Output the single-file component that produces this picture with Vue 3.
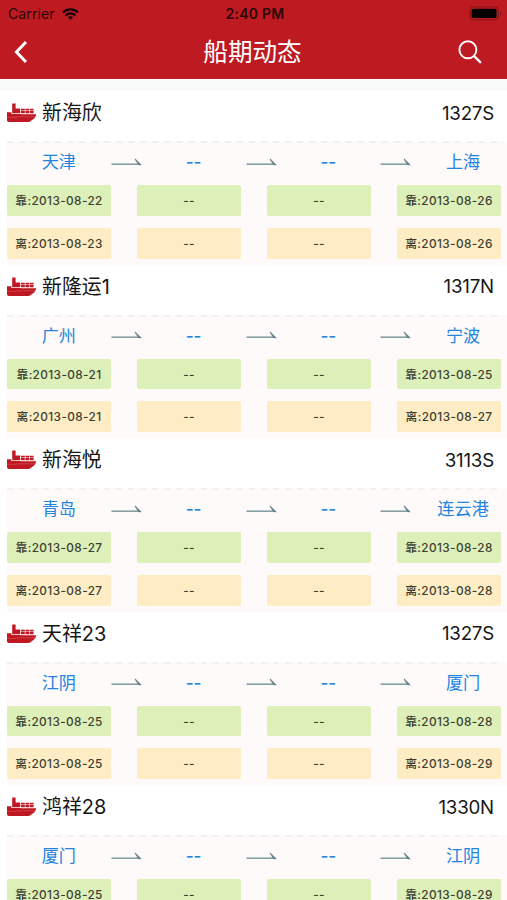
<template>
  <div class="app-container">
    <header class="top">
      <div class="status">
        <div class="carrier">
          <span>Carrier</span>
          <svg class="wifi" width="17" height="12" viewBox="0 0 17 12" fill="none" stroke="#170305" stroke-width="2.3">
            <path d="M1 4.4C5.2.3 11.8.3 16 4.4M3.7 7.4c2.7-2.6 6.9-2.6 9.6 0" />
            <path d="M8.5 11.8 5.9 9.2c1.5-1.4 3.7-1.4 5.2 0z" fill="#170305" stroke="none" />
          </svg>
        </div>
        <span class="time">2:40 PM</span>
        <svg class="battery" width="33" height="15" viewBox="0 0 33 15">
          <rect x="0.9" y="0.9" width="28.5" height="13" rx="3.5" fill="none" stroke="#86131a" stroke-width="1" />
          <rect x="2.6" y="2.8" width="25" height="9.2" rx="1.6" fill="#050000" />
          <path d="M31 5.3c1.4.6 1.4 3.6 0 4.2z" fill="#7d1218" />
        </svg>
      </div>
      <div class="nav">
        <svg class="back" width="24" height="24" viewBox="0 0 24 24" fill="none" stroke="#fff" stroke-width="3">
          <path d="M13 2 3.4 12 13 22" />
        </svg>
        <h1>船期动态</h1>
        <svg class="search" width="24" height="24" viewBox="0 0 24 24" fill="none" stroke="#fff" stroke-width="1.9">
          <circle cx="9.9" cy="9.8" r="8.5" />
          <path d="m15.9 15.9 7 7" stroke-width="2.2" />
        </svg>
      </div>
    </header>

    <section v-for="barco in barcos" :key="barco.name" class="ship">
      <div class="ship-head">
        <svg class="ship-icon" width="30" height="20" viewBox="0 0 30 20" fill="#bf1822">
          <path d="M5.2 10.2V.6h3.4v5h4.6v4.6z" />
          <path d="M14 5.7h3.8v1.9H14zM18.4 5.7h3.8v1.9h-3.8zM22.8 5.7h3.8v1.9h-3.8zM14 8.1h3.8v2.1H14zM18.4 8.1h3.8v2.1h-3.8zM22.8 8.1h3.8v2.1h-3.8z" />
          <path d="M0 9.2h4.4v1.7H13l1.6.4h14.7c-.7 3-2.3 4.9-4.7 5.9-1.1 1.2-2.3 1.8-4 1.8H2C.7 19 0 18.2 0 17z" />
          <path d="M0 14.3h9.2l1-.5h18" fill="none" stroke="#d9666d" stroke-width=".5" />
        </svg>
        <span class="name">{{ barco.name }}</span>
        <span class="voyage">{{ barco.voyage }}</span>
      </div>
      <div class="ship-body">
        <svg class="dash" width="495" height="2"><path d="M0 1h495" stroke="#ededed" stroke-width="1.6" stroke-dasharray="6 6.1" /></svg>
        <div class="route">
          <template v-for="(p, i) in [barco.from, '--', '--', barco.to]" :key="i">
            <svg v-if="i > 0" class="arrow" width="31" height="9" viewBox="0 0 31 9">
              <path d="M.5 6.2H29" fill="none" stroke="#7f989f" stroke-width="1.5" />
              <path d="M24.2.8 30.4 6.9H27.6L24 1.6z" fill="#5f7f88" stroke="#5f7f88" stroke-width=".4" />
            </svg>
            <span class="port" :class="{ empty: p === '--' }">{{ p }}</span>
          </template>
        </div>
        <div class="dates">
          <span class="in">靠:{{ barco.dates[0] }}</span>
          <span class="in">--</span>
          <span class="in">--</span>
          <span class="in">靠:{{ barco.dates[1] }}</span>
          <span class="out">离:{{ barco.dates[2] }}</span>
          <span class="out">--</span>
          <span class="out">--</span>
          <span class="out">离:{{ barco.dates[3] }}</span>
        </div>
      </div>
    </section>
  </div>
</template>

<script setup>
import { ref } from "vue";

// dates: arrival origin, arrival destination, departure origin, departure destination
const barcos = ref([
  { name: "新海欣", voyage: "1327S", from: "天津", to: "上海", dates: ["2013-08-22", "2013-08-26", "2013-08-23", "2013-08-26"] },
  { name: "新隆运1", voyage: "1317N", from: "广州", to: "宁波", dates: ["2013-08-21", "2013-08-25", "2013-08-21", "2013-08-27"] },
  { name: "新海悦", voyage: "3113S", from: "青岛", to: "连云港", dates: ["2013-08-27", "2013-08-28", "2013-08-27", "2013-08-28"] },
  { name: "天祥23", voyage: "1327S", from: "江阴", to: "厦门", dates: ["2013-08-25", "2013-08-28", "2013-08-25", "2013-08-29"] },
  { name: "鸿祥28", voyage: "1330N", from: "厦门", to: "江阴", dates: ["2013-08-25", "2013-08-29", "2013-08-25", "2013-08-29"] }
]);
</script>

<style>
body {
  margin: 0;
  background: #fff;
}
</style>

<style scoped>
.app-container {
  width: 507px;
  height: 900px;
  overflow: hidden;
  background: #fff;
  color: #161616;
  font-family: Inter, "Noto Sans CJK SC", sans-serif;
}
.top {
  height: 79px;
  background: #bd1a21;
  border-bottom: 12.5px solid #f8f9f9;
}
.status {
  display: grid;
  grid-template-columns: 1fr auto 1fr;
  align-items: center;
  height: 27px;
  padding: 0 5px 0 8px;
  font-size: 14px;
  color: #2c0608;
}
.carrier {
  display: flex;
  align-items: center;
  gap: 7px;
  letter-spacing: 0.1px;
}
.time {
  font-size: 14px;
  font-weight: 600;
  letter-spacing: 0.25px;
}
.battery {
  justify-self: end;
}
.nav {
  display: flex;
  align-items: center;
  justify-content: space-between;
  height: 49px;
  padding: 0 25px 0 13px;
}
h1 {
  margin: 0;
  padding-left: 10px;
  font-size: 24.6px;
  line-height: 48px;
  font-weight: 400;
  color: #fff;
}
.ship {
  height: 173.5px;
  overflow: hidden;
}
.ship-head {
  display: flex;
  align-items: center;
  height: 50px;
  box-sizing: border-box;
  padding: 0 13px 6px 7px;
}
.name {
  margin-left: 5px;
  font-size: 19.9px;
  line-height: 30px;
}
.voyage {
  margin-left: auto;
  font-size: 18.7px;
  letter-spacing: -0.2px;
}
.ship-body {
  height: 123.5px;
  margin: 0 0 0 7px;
  background: #fefafa;
}
.dash {
  display: block;
}
.route {
  display: flex;
  align-items: center;
  width: 508px;
  height: 38px;
  margin-bottom: 4px;
}
.port {
  flex: 1;
  text-align: center;
  font-size: 17.2px;
  line-height: 30px;
  color: #2385df;
}
.empty {
  font-weight: 500;
}
.arrow {
  flex: none;
}
.dates {
  display: grid;
  grid-template-columns: repeat(4, 104px);
  gap: 12px 26px;
}
.dates span {
  height: 30.8px;
  border-radius: 2px;
  line-height: 32px;
  text-align: center;
  white-space: nowrap;
  font-size: 11.8px;
  font-weight: 500;
  letter-spacing: 0.4px;
  color: #3c3e31;
}
.dates .in {
  background: #ddf0b9;
}
.dates .out {
  background: #feecc4;
}
</style>
